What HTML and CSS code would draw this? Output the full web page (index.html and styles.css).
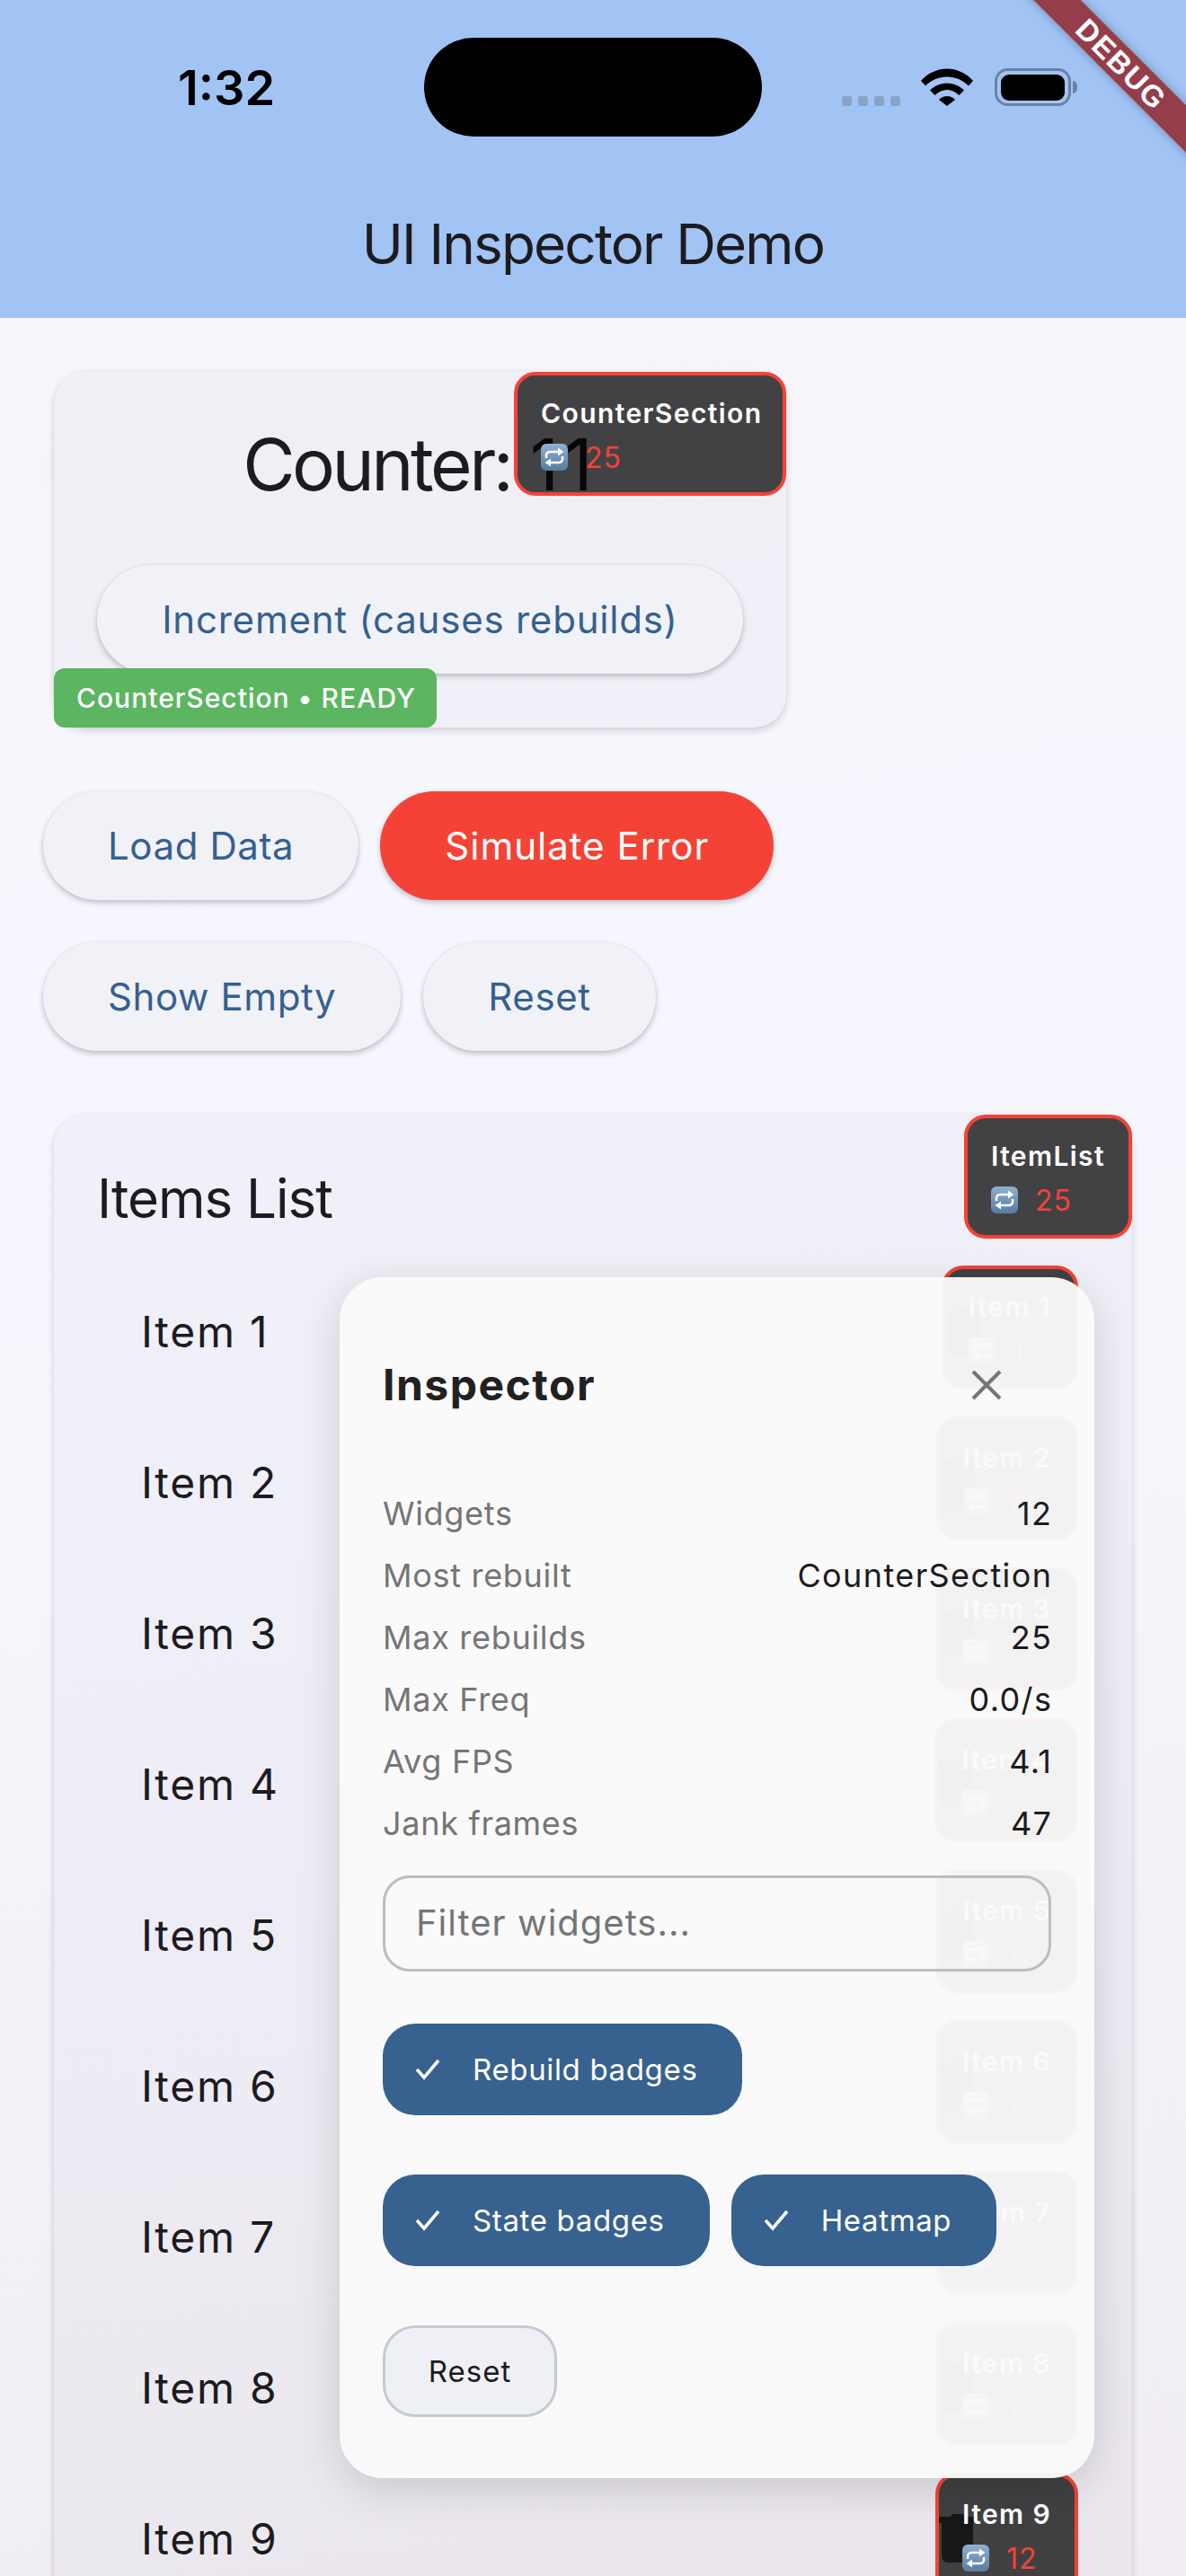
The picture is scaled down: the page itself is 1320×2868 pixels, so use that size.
FILE: index.html
```html
<!DOCTYPE html>
<html lang="en">
<head>
    <meta charset="UTF-8">
    <meta name="viewport" content="width=device-width, initial-scale=1.0">
    <title>UI Inspector Demo</title>
    <link rel="stylesheet" href="styles.css">
</head>
<body>
    <svg class="defs" width="0" height="0" aria-hidden="true">
        <defs>
            <linearGradient id="emoji-bg" x1="0" y1="0" x2="0" y2="1">
                <stop offset="0" stop-color="#8fb0d2"/>
                <stop offset="1" stop-color="#587c9e"/>
            </linearGradient>
            <symbol id="repeat-emoji" viewBox="0 0 30 30">
                <rect width="30" height="30" rx="6" fill="url(#emoji-bg)"/>
                <path d="M6 16v-3a4 4 0 0 1 4-4h10M24 14v3a4 4 0 0 1-4 4H10" fill="none" stroke="#fff" stroke-width="2.6"/>
                <path d="M19 4.500l6.500 4.500-6.500 4.500zM11 16.500l-6.500 4.500 6.500 4.500z" fill="#fff"/>
            </symbol>
            <symbol id="trash-shape" viewBox="0 0 40 54">
                <path d="M0 3H13L15 0H27L29 3H39V10H38V45Q38 54 30 54H10Q3 54 3 45V10H0Z"/>
            </symbol>
        </defs>
    </svg>

    <div class="page">
        <header class="app-bar">
            <div class="status-bar">
                <div class="time">1:32</div>
                <div class="island"></div>
                <div class="status-icons">
                    <svg class="signal" width="65" height="42" viewBox="0 0 65 42">
                        <rect x="0" y="31" width="11" height="11" rx="3"/>
                        <rect x="18" y="31" width="11" height="11" rx="3"/>
                        <rect x="36" y="31" width="11" height="11" rx="3"/>
                        <rect x="54" y="31" width="11" height="11" rx="3"/>
                    </svg>
                    <svg class="wifi" width="58" height="42" viewBox="0 0 58 42">
                        <path d="M0 14C16-4 42-4 58 14L53 19.500C40 6 18 6 5 19.500Z"/>
                        <path d="M10 24.500C20 14 38 14 48 24.500L42.500 30C34 22 24 22 15.500 30Z"/>
                        <path d="M20 35C25 29.500 33 29.500 38 35L29 42Z"/>
                    </svg>
                    <svg class="battery" width="92" height="42" viewBox="0 0 92 42">
                        <rect x="1.500" y="1.500" width="82" height="39" rx="13" fill="none" stroke="#6c81a3" stroke-width="3"/>
                        <rect x="7" y="7" width="71" height="29" rx="9"/>
                        <path d="M87 14c3 0 5 3 5 7s-2 7-5 7z" fill="#6c81a3"/>
                    </svg>
                </div>
            </div>
            <h1 class="app-title">UI Inspector Demo</h1>
        </header>

        <main class="content">
            <section class="card counter-card">
                <div class="counter-text">Counter: <span class="counter-value">11</span></div>
                <button class="pill-btn wide-btn">Increment (causes rebuilds)</button>
                <div class="badge counter-badge">
                    <div class="badge-name">CounterSection</div>
                    <div class="badge-count"><svg class="emoji"><use href="#repeat-emoji"/></svg><span>25</span></div>
                </div>
                <div class="state-badge">CounterSection • READY</div>
            </section>

            <div class="btn-row first-row">
                <button class="pill-btn">Load Data</button>
                <button class="pill-btn error-btn">Simulate Error</button>
            </div>
            <div class="btn-row second-row">
                <button class="pill-btn">Show Empty</button>
                <button class="pill-btn">Reset</button>
            </div>

            <section class="card items-card">
                <h2 class="items-title">Items List</h2>
                <div class="badge list-badge">
                    <div class="badge-name">ItemList</div>
                    <div class="badge-count"><svg class="emoji"><use href="#repeat-emoji"/></svg><span>25</span></div>
                </div>

                <div class="item-row">Item 1
                    <div class="badge item-badge"><svg class="trash"><use href="#trash-shape"/></svg><div class="badge-name">Item 1</div><div class="badge-count"><svg class="emoji"><use href="#repeat-emoji"/></svg><span>12</span></div></div>
                </div>
                <div class="item-row">Item 2
                    <div class="badge item-badge"><svg class="trash"><use href="#trash-shape"/></svg><div class="badge-name">Item 2</div><div class="badge-count"><svg class="emoji"><use href="#repeat-emoji"/></svg><span>12</span></div></div>
                </div>
                <div class="item-row">Item 3
                    <div class="badge item-badge"><svg class="trash"><use href="#trash-shape"/></svg><div class="badge-name">Item 3</div><div class="badge-count"><svg class="emoji"><use href="#repeat-emoji"/></svg><span>12</span></div></div>
                </div>
                <div class="item-row">Item 4
                    <div class="badge item-badge"><svg class="trash"><use href="#trash-shape"/></svg><div class="badge-name">Item 4</div><div class="badge-count"><svg class="emoji"><use href="#repeat-emoji"/></svg><span>12</span></div></div>
                </div>
                <div class="item-row">Item 5
                    <div class="badge item-badge"><svg class="trash"><use href="#trash-shape"/></svg><div class="badge-name">Item 5</div><div class="badge-count"><svg class="emoji"><use href="#repeat-emoji"/></svg><span>12</span></div></div>
                </div>
                <div class="item-row">Item 6
                    <div class="badge item-badge"><svg class="trash"><use href="#trash-shape"/></svg><div class="badge-name">Item 6</div><div class="badge-count"><svg class="emoji"><use href="#repeat-emoji"/></svg><span>12</span></div></div>
                </div>
                <div class="item-row">Item 7
                    <div class="badge item-badge"><svg class="trash"><use href="#trash-shape"/></svg><div class="badge-name">Item 7</div><div class="badge-count"><svg class="emoji"><use href="#repeat-emoji"/></svg><span>12</span></div></div>
                </div>
                <div class="item-row">Item 8
                    <div class="badge item-badge"><svg class="trash"><use href="#trash-shape"/></svg><div class="badge-name">Item 8</div><div class="badge-count"><svg class="emoji"><use href="#repeat-emoji"/></svg><span>12</span></div></div>
                </div>
                <div class="item-row">Item 9
                    <div class="badge item-badge"><svg class="trash"><use href="#trash-shape"/></svg><div class="badge-name">Item 9</div><div class="badge-count"><svg class="emoji"><use href="#repeat-emoji"/></svg><span>12</span></div></div>
                </div>
            </section>
        </main>

        <!-- floating inspector panel -->
        <aside class="inspector">
            <div class="inspector-head">
                <div class="inspector-title">Inspector</div>
                <svg class="close-icon" width="34" height="34" viewBox="0 0 34 34">
                    <path d="M2 2L32 32M32 2L2 32" stroke="#757575" stroke-width="4" fill="none"/>
                </svg>
            </div>

            <div class="stat-row"><span class="stat-label">Widgets</span><span class="stat-value">12</span></div>
            <div class="stat-row"><span class="stat-label">Most rebuilt</span><span class="stat-value">CounterSection</span></div>
            <div class="stat-row"><span class="stat-label">Max rebuilds</span><span class="stat-value">25</span></div>
            <div class="stat-row"><span class="stat-label">Max Freq</span><span class="stat-value">0.0/s</span></div>
            <div class="stat-row"><span class="stat-label">Avg FPS</span><span class="stat-value">4.1</span></div>
            <div class="stat-row"><span class="stat-label">Jank frames</span><span class="stat-value">47</span></div>

            <input type="text" class="filter-input" placeholder="Filter widgets...">

            <div class="chip-row rebuild-row">
                <div class="chip"><svg class="check" width="28" height="24" viewBox="0 0 28 24"><path d="M2 12L10 21L26 2" fill="none" stroke="#fff" stroke-width="3.500"/></svg>Rebuild badges</div>
            </div>
            <div class="chip-row">
                <div class="chip"><svg class="check" width="28" height="24" viewBox="0 0 28 24"><path d="M2 12L10 21L26 2" fill="none" stroke="#fff" stroke-width="3.500"/></svg>State badges</div>
                <div class="chip"><svg class="check" width="28" height="24" viewBox="0 0 28 24"><path d="M2 12L10 21L26 2" fill="none" stroke="#fff" stroke-width="3.500"/></svg>Heatmap</div>
            </div>
            <button class="reset-chip">Reset</button>
        </aside>

        <div class="debug-banner">DEBUG</div>
    </div>
</body>
</html>
```

FILE: styles.css
```css
* {
    box-sizing: border-box;
}
html, body {
    margin: 0;
    padding: 0;
}
body {
    font-family: Inter, "Noto Sans", sans-serif;
    color: #1c1b1f;
}
.defs {
    position: absolute;
}
.page {
    position: relative;
    width: 1320px;
    height: 2868px;
    overflow: hidden;
    background: linear-gradient(172deg, #f8f3f8 0%, #f6f7fe 35%, #f5f5fc 60%, #f1ecf3 100%);
}

/* app bar */
.app-bar {
    height: 354px;
    padding-top: 42px;
    background-color: #a2c4f4;
}
.status-bar {
    display: grid;
    grid-template-columns: 472px 376px 1fr;
    height: 110px;
    align-items: center;
}
.time {
    padding-left: 198px;
    font-size: 54px;
    font-weight: 600;
    letter-spacing: 0;
    color: #000;
}
.island {
    height: 110px;
    border-radius: 55px;
    background-color: #000;
}
.status-icons {
    display: flex;
    align-items: center;
    padding-left: 89px;
    height: 42px;
}
.signal {
    fill: #89a2c8;
    margin-right: 23px;
}
.wifi {
    fill: #000;
    margin-right: 24px;
}
.battery {
    fill: #000;
}
.app-title {
    margin: 80px 0 0;
    height: 80px;
    line-height: 80px;
    text-align: center;
    font-size: 62px;
    font-weight: 400;
    letter-spacing: -1.85px;
}
.debug-banner {
    position: absolute;
    top: 53px;
    left: 1098px;
    width: 300px;
    height: 37px;
    line-height: 37px;
    text-align: center;
    transform: rotate(45deg);
    background-color: #963d4b;
    box-shadow: 0 0 12px rgba(0, 0, 0, 0.3);
    color: #fff;
    font-family: "Liberation Sans", sans-serif;
    font-size: 33px;
    font-weight: 700;
    letter-spacing: 1.500px;
}

/* main column */
.content {
    padding: 59px 60px 0;
}
.card {
    position: relative;
    border-radius: 36px;
    background-color: rgba(50, 50, 100, 0.03);
    box-shadow: 0 4px 8px rgba(0, 0, 0, 0.15), 0 0 2px rgba(0, 0, 0, 0.08);
}
.counter-card {
    width: 815px;
    height: 397px;
    padding: 48px 48px 60px;
}
.counter-text {
    height: 112px;
    line-height: 112px;
    text-align: center;
    font-size: 80px;
    letter-spacing: -3.5px;
    word-spacing: 2.5px;
    margin-bottom: 56px;
    white-space: nowrap;
}
.counter-value {
    letter-spacing: 5px;
}
.pill-btn {
    height: 121px;
    padding: 0 72px;
    border: none;
    border-radius: 61px;
    background-color: #f1f2f8;
    box-shadow: 0 3px 6px rgba(0, 0, 0, 0.22), 0 0 2px rgba(0, 0, 0, 0.08);
    font-family: inherit;
    font-size: 42px;
    letter-spacing: 0.6px;
    color: #35608f;
}
.wide-btn {
    width: 100%;
    padding: 0;
    letter-spacing: 0.78px;
    white-space: nowrap;
}
.error-btn {
    background-color: #f44336;
    letter-spacing: 1px;
    color: #fff;
}
.btn-row {
    display: flex;
    gap: 24px;
    margin: 0 0 0 -12px;
}
.first-row {
    margin-top: 71px;
}
.second-row {
    gap: 25px;
    margin-top: 47px;
}
.items-card {
    width: 1200px;
    margin-top: 70px;
    padding: 48px 48px 0;
}
.items-title {
    margin: 0 0 20px;
    height: 90px;
    line-height: 92px;
    font-size: 60px;
    font-weight: 400;
    letter-spacing: -1px;
}
.item-row {
    position: relative;
    height: 168px;
    padding-left: 49px;
    line-height: 170px;
    font-size: 48px;
    letter-spacing: 1.75px;
}

/* rebuild badges */
.badge {
    position: absolute;
    height: 138px;
    padding: 24px 26px 0;
    border: 4px solid #f44336;
    border-radius: 24px;
    background-color: rgba(0, 0, 0, 0.725);
    color: #fff;
    line-height: normal;
    letter-spacing: normal;
}
.badge-name {
    position: relative;
    height: 36px;
    line-height: 36px;
    font-size: 30px;
    font-weight: 600;
    letter-spacing: 1.4px;
    white-space: nowrap;
}
.badge-count {
    position: relative;
    display: flex;
    align-items: center;
    gap: 19px;
    margin-top: 13px;
    height: 36px;
    font-size: 32px;
    letter-spacing: 1px;
    color: #f44336;
}
.emoji {
    width: 30px;
    height: 30px;
}
.trash {
    position: absolute;
    left: 0;
    top: 42px;
    width: 40px;
    height: 54px;
    fill: rgba(0, 0, 0, 0.62);
}
.counter-badge {
    top: 1px;
    right: 0;
    width: 303px;
}
.list-badge {
    top: 1px;
    right: 0;
    width: 187px;
}
.item-badge {
    top: 11px;
    right: 12px;
}
.state-badge {
    position: absolute;
    left: 0;
    bottom: 0;
    width: 426px;
    height: 66px;
    line-height: 67px;
    padding-left: 25px;
    border-radius: 12px;
    background-color: #5cb561;
    color: #fff;
    font-size: 30px;
    font-weight: 500;
    letter-spacing: 1px;
    white-space: nowrap;
}

/* inspector panel */
.inspector {
    position: absolute;
    top: 1422px;
    left: 378px;
    width: 840px;
    height: 1337px;
    padding: 80px 48px 68px;
    border-radius: 48px;
    background-color: rgba(250, 250, 250, 0.955);
    box-shadow: 0 12px 48px rgba(0, 0, 0, 0.15);
}
.inspector-head {
    position: relative;
    height: 78px;
    margin-bottom: 70px;
}
.inspector-title {
    line-height: 80px;
    font-size: 48px;
    font-weight: 700;
    letter-spacing: 1.500px;
    color: #212121;
}
.close-icon {
    position: absolute;
    top: 23px;
    right: 55px;
}
.stat-row {
    display: flex;
    justify-content: space-between;
    height: 69px;
    line-height: 71px;
    font-size: 36px;
}
.stat-label {
    letter-spacing: 0.7px;
    color: #757575;
}
.stat-value {
    margin-right: -1.4px;
    letter-spacing: 1.4px;
    color: #1c1b1f;
}
.filter-input {
    display: block;
    width: 100%;
    height: 107px;
    margin-top: 24px;
    padding: 0 34px 3px;
    border: 3px solid #bdbdbd;
    border-radius: 30px;
    background: transparent;
    font-family: inherit;
    font-size: 40px;
    letter-spacing: 1px;
    outline: none;
}
.filter-input::placeholder {
    color: #757575;
    opacity: 1;
}
.chip-row {
    display: flex;
    gap: 24px;
    margin-bottom: 66px;
}
.rebuild-row {
    margin-top: 58px;
}
.chip {
    display: flex;
    align-items: center;
    height: 102px;
    padding: 0 50px 0 36px;
    border-radius: 36px;
    background-color: #37618e;
    color: #fff;
    font-size: 33px;
    letter-spacing: 0.65px;
    white-space: nowrap;
}
.check {
    margin-right: 36px;
}
.reset-chip {
    display: block;
    width: 194px;
    height: 102px;
    padding: 0;
    border: 3px solid #c5c9d3;
    border-radius: 36px;
    background-color: #eef0f5;
    color: #1c1b1f;
    font-family: inherit;
    font-size: 33px;
    letter-spacing: 1px;
}
```
